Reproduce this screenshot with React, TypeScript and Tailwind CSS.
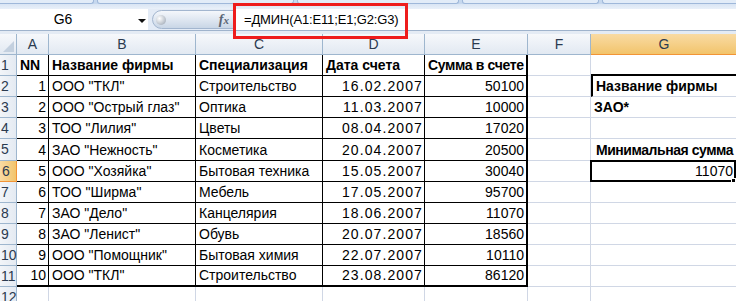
import React from "react";

const COLS = [
  { name: "A", w: 32 },
  { name: "B", w: 147 },
  { name: "C", w: 127 },
  { name: "D", w: 102 },
  { name: "E", w: 103 },
  { name: "F", w: 63 },
  { name: "G", w: 146 },
];

const TABLE = [
  ["NN", "Название фирмы", "Специализация", "Дата счета", "Сумма в счете"],
  ["1", 'ООО "ТКЛ"', "Строительство", "16.02.2007", "50100"],
  ["2", 'ООО "Острый глаз"', "Оптика", "11.03.2007", "10000"],
  ["3", 'ТОО "Лилия"', "Цветы", "08.04.2007", "17020"],
  ["4", 'ЗАО "Нежность"', "Косметика", "20.04.2007", "20500"],
  ["5", 'ООО "Хозяйка"', "Бытовая техника", "15.05.2007", "30040"],
  ["6", 'ТОО "Ширма"', "Мебель", "17.05.2007", "95700"],
  ["7", 'ЗАО "Дело"', "Канцелярия", "18.06.2007", "11070"],
  ["8", 'ЗАО "Ленист"', "Обувь", "20.07.2007", "18560"],
  ["9", 'ООО "Помощник"', "Бытовая химия", "22.07.2007", "10110"],
  ["10", 'ООО "ТКЛ"', "Строительство", "23.08.2007", "86120"],
];

// extra cells outside the table (column G)
const SIDE: Record<number, { text: string; bold?: boolean; right?: boolean; tight?: boolean }> = {
  2: { text: "Название фирмы", bold: true },
  3: { text: "ЗАО*", bold: true },
  5: { text: "Минимальная сумма", bold: true, tight: true },
  6: { text: "11070", right: true },
};

const ROW_H = [21, 21, 21, 21, 22, 21, 21, 21, 21, 21, 21, 21];

function TopBar() {
  return (
    <div className="h-[34px] bg-[#dbe6f4] flex flex-col">
      {/* ribbon group edges */}
      <div className="h-[4px] bg-[#c6d8ee] flex gap-[3px] overflow-hidden">
        <div className="w-[96px] -ml-[2px] shrink-0 bg-[#e2ecf8] border-b border-r border-[#9fb8da] rounded-br-[3px]" />
        <div className="w-[197px] shrink-0 bg-[#e2ecf8] border-b border-x border-[#9fb8da] rounded-b-[3px]" />
        <div className="w-[162px] shrink-0 bg-[#e2ecf8] border-b border-x border-[#9fb8da] rounded-b-[3px]" />
        <div className="w-[137px] shrink-0 bg-[#e2ecf8] border-b border-x border-[#9fb8da] rounded-b-[3px]" />
        <div className="w-[140px] shrink-0 bg-[#e2ecf8] border-b border-l border-[#9fb8da] rounded-bl-[3px]" />
      </div>
      <div className="h-[5px] bg-gradient-to-b from-[#d9e5f4] to-[#e9f0f9]" />
      {/* name box + formula */}
      <div className="h-[22px] flex items-stretch border-b border-[#9fb3cc] bg-[#e3ebf6]">
        <div className="w-[148px] bg-white flex items-center relative">
          <span className="w-[126px] text-center text-[14px] text-black">G6</span>
          <svg className="absolute left-[138px] top-[10px]" width="8" height="4" viewBox="0 0 8 4">
            <path d="M0 0 H8 L4 4 Z" fill="#111" />
          </svg>
        </div>
        <div className="w-[4px]" />
        <div className="w-[82px] my-[1px] rounded-l-full bg-gradient-to-b from-[#f4f7fb] via-[#dfe7f1] to-[#c9d6e6] border border-[#a3b6cf] flex items-center justify-between pl-[3px] pr-[4px]">
          <div className="w-[10px] h-[10px] rounded-full bg-[radial-gradient(circle_at_35%_35%,#ffffff,#b4bcc6_70%,#8d96a2)]" />
          <span className="text-[14px] italic font-bold text-[#5b6574] leading-none" style={{ fontFamily: '"Liberation Serif", serif' }}>
            f<span className="text-[11px]">x</span>
          </span>
        </div>
        <div className="flex-1 bg-white flex items-center pl-[10px] text-[13px] tracking-[-0.15px] text-black">
          =ДМИН(A1:E11;E1;G2:G3)
        </div>
      </div>
      <div className="h-[3px] bg-[#e4ebf4]" />
    </div>
  );
}

function HeaderRow() {
  return (
    <div className="flex h-[21px]">
      <div className="w-[17px] shrink-0 bg-gradient-to-b from-[#f6f8fb] to-[#e2e9f2] border-r border-b border-[#9eb6ce] relative overflow-hidden">
        <svg className="absolute right-[2px] bottom-[2px]" width="11" height="11" viewBox="0 0 11 11">
          <path d="M11 0 V11 H0 Z" fill="#c3d0df" />
        </svg>
      </div>
      {COLS.map((c) =>
        c.name === "G" ? (
          <div
            key={c.name}
            style={{ width: c.w }}
            className="shrink-0 flex items-center justify-center bg-gradient-to-b from-[#f9dba3] to-[#f2c46b] border-b border-[#f29436] text-[14px] text-[#2b3a4f]"
          >
            {c.name}
          </div>
        ) : (
          <div
            key={c.name}
            style={{ width: c.w }}
            className="shrink-0 flex items-center justify-center bg-gradient-to-b from-[#f6f8fb] to-[#e2e9f2] border-r border-b border-[#9eb6ce] text-[14px] text-[#2b3a4f]"
          >
            {c.name}
          </div>
        )
      )}
    </div>
  );
}

function DataRow({ r }: { r: number }) {
  const inTable = r >= 1 && r <= 11;
  const data = inTable ? TABLE[r - 1] : null;
  const side = SIDE[r];
  const active = r === 6;

  return (
    <div className="flex" style={{ height: ROW_H[r - 1] }}>
      <div
        className={
          active
            ? "w-[17px] shrink-0 bg-gradient-to-r from-[#f9dba3] to-[#f2c46b] border-r border-b border-[#f29436] text-[14px] text-[#2b3a4f] flex items-center pl-[2px]"
            : "w-[17px] shrink-0 bg-gradient-to-r from-[#f2f5f9] to-[#e4eaf2] border-r border-b border-[#9eb6ce] text-[14px] text-[#2b3a4f] flex items-center pl-[1px]"
        }
      >
        {r}
      </div>
      {COLS.map((c, ci) => {
        if (data && ci <= 4) {
          const text = data[ci];
          const header = r === 1;
          const right = !header && (ci === 0 || ci === 3 || ci === 4);
          const rb = ci === 4 ? "border-r-2" : "border-r";
          const bb = r === 11 ? "border-b-2" : "border-b";
          const spacing = header && ci === 4 ? "tracking-[-0.35px]" : !header && ci === 3 ? "tracking-[1.1px]" : "";
          const pad = right ? (ci === 3 ? "justify-end pr-[1px]" : "justify-end pr-[2px]") : "justify-start pl-[3px]";
          return (
            <div
              key={c.name}
              style={{ width: c.w }}
              className={`shrink-0 flex items-end overflow-hidden whitespace-nowrap border-black ${rb} ${bb} ${pad} ${spacing} ${
                header ? "font-bold" : ""
              } text-[14px] leading-[18px] pb-[1px] text-black`}
            >
              {text}
            </div>
          );
        }
        if (c.name === "G") {
          return (
            <div
              key={c.name}
              style={{ width: c.w }}
              className={`shrink-0 flex items-end whitespace-nowrap border-r border-b border-[#d0d7e5] text-[14px] leading-[18px] pb-[1px] text-black ${
                r === 1 ? "border-b-2 border-b-black" : ""
              } ${r === 2 ? "border-l-2 border-l-black" : ""} ${
                side?.right ? "justify-end pr-[3px]" : side?.tight ? "justify-start pl-[5px] tracking-[-0.45px]" : "justify-start pl-[3px]"
              } ${side?.bold ? "font-bold" : ""}`}
            >
              {side?.text}
            </div>
          );
        }
        return (
          <div
            key={c.name}
            style={{ width: c.w }}
            className="shrink-0 border-r border-b border-[#d0d7e5]"
          />
        );
      })}
    </div>
  );
}

export default function App() {
  return (
    <div
      className="w-[736px] h-[301px] overflow-hidden bg-white relative"
      style={{ fontFamily: '"Liberation Sans", Arial, sans-serif' }}
    >
      <TopBar />
      <HeaderRow />
      {Array.from({ length: 12 }, (_, i) => (
        <DataRow key={i} r={i + 1} />
      ))}

      {/* active cell G6 */}
      <div className="absolute left-[590px] top-[160px] w-[146px] h-[22px] border-2 border-black pointer-events-none" />
      <div className="absolute left-[731px] top-[178px] w-[5px] h-[5px] bg-black border border-white pointer-events-none" />

      {/* red highlight around the formula */}
      <div className="absolute left-[233px] top-[3px] w-[175px] h-[36px] border-[3px] border-[#ee1c1c] pointer-events-none" />
    </div>
  );
}
